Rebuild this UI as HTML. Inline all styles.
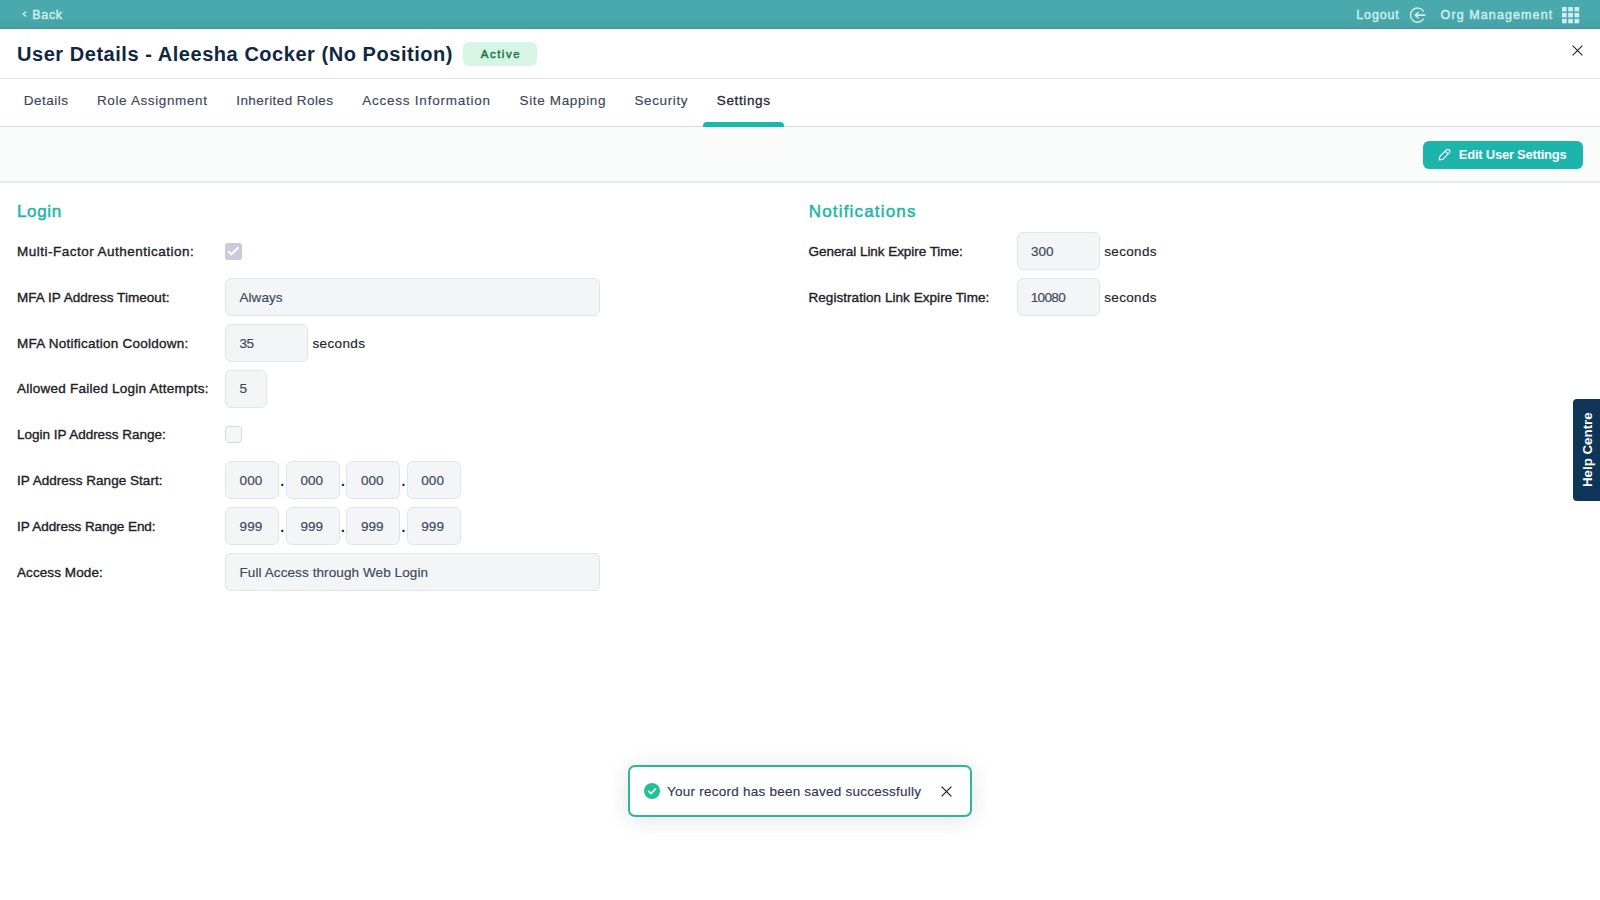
<!DOCTYPE html>
<html lang="en">
<head>
<meta charset="utf-8">
<title>User Details - Aleesha Cocker (No Position)</title>
<style>
*{box-sizing:border-box;margin:0;padding:0}
html,body{width:1600px;height:900px;overflow:hidden;background:#fff}
body{position:relative;font-family:"Liberation Sans",sans-serif;font-size:13px;color:#1d2026}
.t{position:absolute;white-space:pre;line-height:normal;font-size:13.5px}
.abs{position:absolute}
#topbar{left:0;top:0;width:1600px;height:29px;background:linear-gradient(#49a9ac 0,#49a9ac 62%,#46a3a8 84%,#45a2a6 100%);border-bottom:1px solid #4a8f8e}
#titleline{left:0;top:78px;width:1600px;height:1px;background:#e1e3ea}
#tabline{left:0;top:126px;width:1600px;height:1px;background:#d9dbe4}
#toolbar{left:0;top:127px;width:1600px;height:56px;background:#fafbfb;border-bottom:2px solid #e8eaee}
#badge{left:463px;top:42px;width:74px;height:24px;border-radius:6px;background:#d6f5e5}
#tabactive{left:703px;top:122px;width:81px;height:5px;border-radius:4px 4px 0 0;background:#19b8ac}
#editbtn{left:1423px;top:141px;width:160px;height:28px;border-radius:6px;background:#1cb4ab}
.in{position:absolute;background:#f4f5f7;border:1px solid #e2e4e9;border-radius:6px}
.dot{color:#1d2026;font-size:14px;font-weight:700}
#cb1{left:225px;top:243px;width:17px;height:17px;border-radius:3px;background:#c9cade}
#cb2{left:225px;top:426px;width:17px;height:17px;border-radius:3.5px;background:#f5f6f8;border:1px solid #d5d7de}
#toast{left:628px;top:765px;width:344px;height:52px;border-radius:7px;background:#fff;border:2px solid #2db79a;box-shadow:0 3px 22px rgba(30,40,60,.13)}
#help{left:1573px;top:399px;width:27px;height:102px;border-radius:4px 0 0 4px;background:#0e3557}
#helptxt{position:absolute;left:1579.6px;top:487.3px;width:80px;height:16px;transform-origin:0 0;transform:rotate(-90deg);font:700 13.3px/16px "Liberation Sans",sans-serif;color:#fff;white-space:pre;text-align:left}
svg{position:absolute;overflow:visible}
</style>
</head>
<body>
<div id="topbar" class="abs"></div>
<div id="titleline" class="abs"></div>
<div id="tabline" class="abs"></div>
<div id="toolbar" class="abs"></div>
<div id="badge" class="abs"></div>
<div id="tabactive" class="abs"></div>
<div id="editbtn" class="abs"></div>
<div class="in" style="left:1017px;top:232px;width:83px;height:38px"></div>
<div class="in" style="left:1017px;top:278px;width:83px;height:38px"></div>
<div class="in" style="left:225px;top:278px;width:375px;height:38px"></div>
<div class="in" style="left:225px;top:324px;width:83px;height:38px"></div>
<div class="in" style="left:225px;top:370px;width:42px;height:38px"></div>
<div class="in" style="left:225px;top:461px;width:54px;height:38px"></div>
<div class="in" style="left:286px;top:461px;width:54px;height:38px"></div>
<div class="in" style="left:346px;top:461px;width:54px;height:38px"></div>
<div class="in" style="left:407px;top:461px;width:54px;height:38px"></div>
<span class="t dot" style="left:280.35px;top:473px">.</span>
<span class="t dot" style="left:340.95px;top:473px">.</span>
<span class="t dot" style="left:401.55px;top:473px">.</span>
<div class="in" style="left:225px;top:507px;width:54px;height:38px"></div>
<div class="in" style="left:286px;top:507px;width:54px;height:38px"></div>
<div class="in" style="left:346px;top:507px;width:54px;height:38px"></div>
<div class="in" style="left:407px;top:507px;width:54px;height:38px"></div>
<span class="t dot" style="left:280.35px;top:519px">.</span>
<span class="t dot" style="left:340.95px;top:519px">.</span>
<span class="t dot" style="left:401.55px;top:519px">.</span>
<div class="in" style="left:225px;top:553px;width:375px;height:38px"></div>
<div id="cb1" class="abs"></div>
<div id="cb2" class="abs"></div>
<div id="toast" class="abs"></div>
<div id="help" class="abs"></div>
<div id="helptxt">Help Centre</div>

<!-- icons -->
<svg id="i-back" style="left:22px;top:11.3px" width="5" height="6" viewBox="0 0 5 6"><path d="M4.3 0.5 L1 3 L4.3 5.5" fill="none" stroke="#d0f0f2" stroke-width="1.3"/></svg>
<svg id="i-logout" style="left:1409px;top:7px" width="17" height="17" viewBox="0 0 17 17"><path d="M14.4 4.1 A7.1 7.1 0 1 0 14.4 12.2" fill="none" stroke="#d6eff0" stroke-width="1.4" stroke-linecap="round"/><path d="M15.7 8.15 H6.5 M9 5.5 L6.3 8.15 L9 10.8" fill="none" stroke="#d6eff0" stroke-width="1.6" stroke-linecap="round" stroke-linejoin="round"/></svg>
<svg id="i-grid" style="left:1562px;top:7px" width="17.2" height="16.3" viewBox="0 0 17.2 16.3" fill="#cfeeef"><rect x="0" y="0" width="4.7" height="4.4"/><rect x="6.2" y="0" width="4.7" height="4.4"/><rect x="12.5" y="0" width="4.7" height="4.4"/><rect x="0" y="5.9" width="4.7" height="4.5"/><rect x="6.2" y="5.9" width="4.7" height="4.5"/><rect x="12.5" y="5.9" width="4.7" height="4.5"/><rect x="0" y="11.9" width="4.7" height="4.4"/><rect x="6.2" y="11.9" width="4.7" height="4.4"/><rect x="12.5" y="11.9" width="4.7" height="4.4"/></svg>
<svg id="i-close" style="left:1572px;top:45px" width="11" height="11" viewBox="0 0 11 11"><path d="M0.6 0.6 L10.4 10.4 M10.4 0.6 L0.6 10.4" stroke="#222" stroke-width="1.1" fill="none"/></svg>
<svg id="i-pencil" style="left:1438.4px;top:147.6px" width="13" height="13" viewBox="0 0 13 13"><path d="M1.2 11.9 L1.9 8.4 L8.3 2 A2.05 2.05 0 0 1 11.2 4.9 L4.8 11.3 Z M7.2 3.1 L10.1 6" fill="none" stroke="#fff" stroke-width="1.2" stroke-linejoin="round"/></svg>
<svg id="i-check1" style="left:225px;top:243px" width="17" height="17" viewBox="0 0 17 17"><path d="M3.2 8.2 L6.4 11.3 L13.6 4.2" fill="none" stroke="#fff" stroke-width="2" stroke-linejoin="miter"/></svg>
<svg id="i-ok" style="left:643.5px;top:783px" width="16" height="16" viewBox="0 0 16 16"><circle cx="8" cy="8" r="8" fill="#1fc198"/><path d="M4.6 8.3 L7 10.6 L11.5 5.9" fill="none" stroke="#fff" stroke-width="1.6" stroke-linecap="round" stroke-linejoin="round"/></svg>
<svg id="i-tclose" style="left:940.5px;top:785.7px" width="11" height="11" viewBox="0 0 11 11"><path d="M0.6 0.6 L10.4 10.4 M10.4 0.6 L0.6 10.4" stroke="#222" stroke-width="1.25" fill="none"/></svg>

<!-- texts -->
<span class="t" style="left:32.25px;top:8.00px;font-size:12.5px;color:#d0f0f2;letter-spacing:0.684px;-webkit-text-stroke:.4px #d0f0f2;">Back</span>
<span class="t" style="left:1356.25px;top:8.00px;font-size:12.5px;color:#d0f0f2;letter-spacing:0.863px;-webkit-text-stroke:.4px #d0f0f2;">Logout</span>
<span class="t" style="left:1440.60px;top:8.00px;font-size:12.5px;color:#d0f0f2;letter-spacing:1.101px;-webkit-text-stroke:.4px #d0f0f2;">Org Management</span>
<span class="t" style="left:17.00px;top:43.00px;font-size:20px;font-weight:700;color:#0f2741;letter-spacing:0.542px;">User Details - Aleesha Cocker (No Position)</span>
<span class="t" style="left:480.75px;top:48.00px;font-size:11.4px;color:#1a7546;letter-spacing:1.544px;-webkit-text-stroke:.45px #1a7546;">Active</span>
<span class="t" style="left:23.75px;top:93.00px;color:#3a475a;letter-spacing:0.497px;-webkit-text-stroke:.15px #3a475a;">Details</span>
<span class="t" style="left:97.00px;top:93.00px;color:#3a475a;letter-spacing:0.621px;-webkit-text-stroke:.15px #3a475a;">Role Assignment</span>
<span class="t" style="left:236.25px;top:93.00px;color:#3a475a;letter-spacing:0.424px;-webkit-text-stroke:.15px #3a475a;">Inherited Roles</span>
<span class="t" style="left:362.25px;top:93.00px;color:#3a475a;letter-spacing:0.762px;-webkit-text-stroke:.15px #3a475a;">Access Information</span>
<span class="t" style="left:519.50px;top:93.00px;color:#3a475a;letter-spacing:0.653px;-webkit-text-stroke:.15px #3a475a;">Site Mapping</span>
<span class="t" style="left:634.50px;top:93.00px;color:#3a475a;letter-spacing:0.603px;-webkit-text-stroke:.15px #3a475a;">Security</span>
<span class="t" style="left:716.75px;top:93.00px;color:#1d2a3d;letter-spacing:0.638px;-webkit-text-stroke:.3px #1d2a3d;">Settings</span>
<span class="t" style="left:1458.75px;top:147.00px;font-size:13px;font-weight:700;color:#ffffff;letter-spacing:-0.233px;">Edit User Settings</span>
<span class="t" style="left:17.00px;top:202.00px;font-size:17px;color:#1fb5a9;letter-spacing:0.660px;-webkit-text-stroke:.5px #1fb5a9;">Login</span>
<span class="t" style="left:808.75px;top:202.00px;font-size:17px;color:#1fb5a9;letter-spacing:1.178px;-webkit-text-stroke:.5px #1fb5a9;">Notifications</span>
<span class="t" style="left:17.00px;top:244.00px;color:#1d2026;letter-spacing:0.488px;-webkit-text-stroke:.35px #1d2026;">Multi-Factor Authentication:</span>
<span class="t" style="left:17.00px;top:290.00px;color:#1d2026;letter-spacing:0.053px;-webkit-text-stroke:.35px #1d2026;">MFA IP Address Timeout:</span>
<span class="t" style="left:17.00px;top:336.00px;color:#1d2026;letter-spacing:0.246px;-webkit-text-stroke:.35px #1d2026;">MFA Notification Cooldown:</span>
<span class="t" style="left:17.00px;top:381.00px;color:#1d2026;letter-spacing:0.238px;-webkit-text-stroke:.35px #1d2026;">Allowed Failed Login Attempts:</span>
<span class="t" style="left:17.00px;top:427.00px;color:#1d2026;letter-spacing:-0.016px;-webkit-text-stroke:.35px #1d2026;">Login IP Address Range:</span>
<span class="t" style="left:17.00px;top:473.00px;color:#1d2026;letter-spacing:0.041px;-webkit-text-stroke:.35px #1d2026;">IP Address Range Start:</span>
<span class="t" style="left:17.00px;top:519.00px;color:#1d2026;letter-spacing:-0.080px;-webkit-text-stroke:.35px #1d2026;">IP Address Range End:</span>
<span class="t" style="left:17.00px;top:565.00px;color:#1d2026;letter-spacing:0.087px;-webkit-text-stroke:.35px #1d2026;">Access Mode:</span>
<span class="t" style="left:808.50px;top:244.00px;color:#1d2026;letter-spacing:-0.045px;-webkit-text-stroke:.35px #1d2026;">General Link Expire Time:</span>
<span class="t" style="left:808.50px;top:290.00px;color:#1d2026;letter-spacing:0.049px;-webkit-text-stroke:.35px #1d2026;">Registration Link Expire Time:</span>
<span class="t" style="left:239.50px;top:290.00px;color:#3b4a5f;letter-spacing:0.047px;-webkit-text-stroke:.18px #3b4a5f;">Always</span>
<span class="t" style="left:239.50px;top:336.00px;color:#3b4a5f;letter-spacing:-0.531px;-webkit-text-stroke:.18px #3b4a5f;">35</span>
<span class="t" style="left:239.50px;top:381.00px;color:#3b4a5f;letter-spacing:-0.016px;-webkit-text-stroke:.18px #3b4a5f;">5</span>
<span class="t" style="left:239.60px;top:473.00px;color:#3b4a5f;letter-spacing:0.034px;-webkit-text-stroke:.18px #3b4a5f;">000</span>
<span class="t" style="left:239.60px;top:519.00px;color:#3b4a5f;letter-spacing:0.034px;-webkit-text-stroke:.18px #3b4a5f;">999</span>
<span class="t" style="left:300.40px;top:473.00px;color:#3b4a5f;letter-spacing:0.034px;-webkit-text-stroke:.18px #3b4a5f;">000</span>
<span class="t" style="left:300.40px;top:519.00px;color:#3b4a5f;letter-spacing:0.034px;-webkit-text-stroke:.18px #3b4a5f;">999</span>
<span class="t" style="left:360.90px;top:473.00px;color:#3b4a5f;letter-spacing:0.034px;-webkit-text-stroke:.18px #3b4a5f;">000</span>
<span class="t" style="left:360.90px;top:519.00px;color:#3b4a5f;letter-spacing:0.034px;-webkit-text-stroke:.18px #3b4a5f;">999</span>
<span class="t" style="left:421.30px;top:473.00px;color:#3b4a5f;letter-spacing:0.034px;-webkit-text-stroke:.18px #3b4a5f;">000</span>
<span class="t" style="left:421.30px;top:519.00px;color:#3b4a5f;letter-spacing:0.034px;-webkit-text-stroke:.18px #3b4a5f;">999</span>
<span class="t" style="left:239.50px;top:565.00px;color:#3b4a5f;letter-spacing:0.094px;-webkit-text-stroke:.18px #3b4a5f;">Full Access through Web Login</span>
<span class="t" style="left:1031.00px;top:244.00px;color:#3b4a5f;letter-spacing:-0.066px;-webkit-text-stroke:.18px #3b4a5f;">300</span>
<span class="t" style="left:1030.75px;top:290.00px;color:#3b4a5f;letter-spacing:-0.637px;-webkit-text-stroke:.18px #3b4a5f;">10080</span>
<span class="t" style="left:312.50px;top:336.00px;color:#22262c;letter-spacing:0.367px;-webkit-text-stroke:.18px #22262c;">seconds</span>
<span class="t" style="left:1104.25px;top:244.00px;color:#22262c;letter-spacing:0.326px;-webkit-text-stroke:.18px #22262c;">seconds</span>
<span class="t" style="left:1104.25px;top:290.00px;color:#22262c;letter-spacing:0.326px;-webkit-text-stroke:.18px #22262c;">seconds</span>
<span class="t" style="left:667.00px;top:784.00px;color:#2b3850;letter-spacing:0.239px;-webkit-text-stroke:.15px #2b3850;">Your record has been saved successfully</span>
</body>
</html>
